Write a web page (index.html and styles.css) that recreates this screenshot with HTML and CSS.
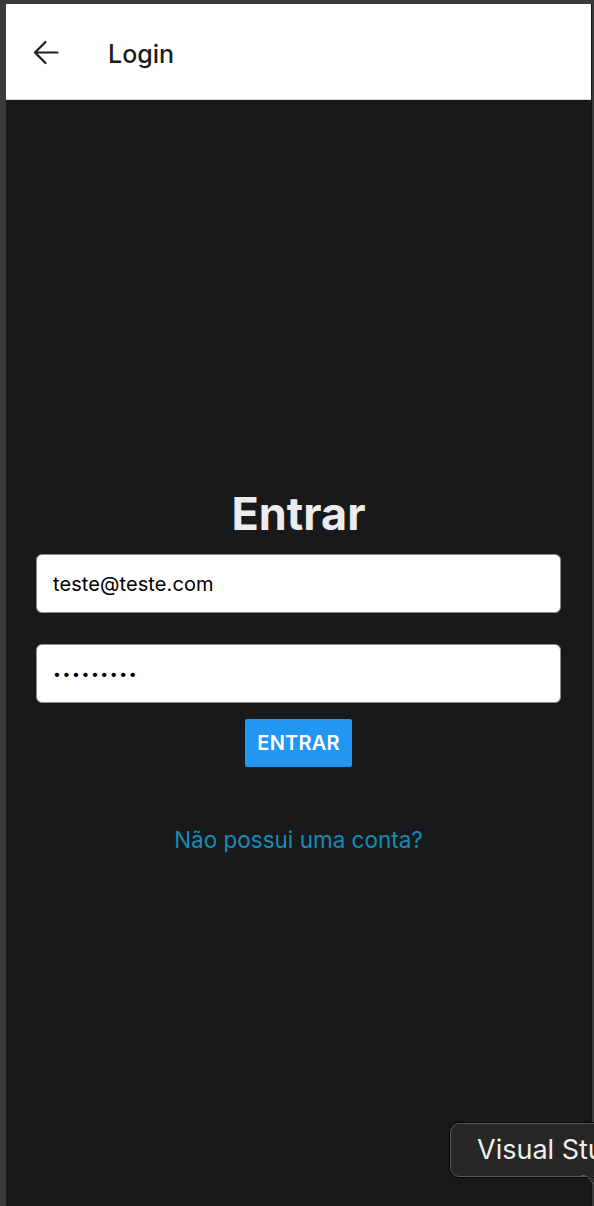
FILE: index.html
```html
<!DOCTYPE html>
<html lang="pt-BR">
<head>
<meta charset="utf-8">
<title>Login</title>
<link rel="stylesheet" href="styles.css">
</head>
<body>
<div class="device">
  <header class="app-header">
    <button class="back" aria-label="Voltar">
      <svg width="26" height="26" viewBox="0 0 26 26" fill="none" stroke="#1c1c1e" stroke-width="2.2" stroke-linecap="round" stroke-linejoin="round">
        <path d="M24.5 12.5 H2 M12.5 2 L2 12.5 L12.5 23"/>
      </svg>
    </button>
    <h1 class="header-title">Login</h1>
  </header>
  <main class="screen">
    <h2 class="title">Entrar</h2>
    <input class="field" type="email" value="teste@teste.com">
    <input class="field field-pass" type="password" value="123456789">
    <button class="btn">ENTRAR</button>
    <a class="link" href="#">Não possui uma conta?</a>
  </main>
</div>
<div class="tooltip">Visual Studio Code
  <svg class="tail" width="14" height="14" viewBox="0 0 14 14">
    <path d="M0 1 H2 Q8 1 12 10 L12 0 Z" fill="#262626"/>
    <path d="M0 1.5 H2 Q8 1.5 12 10" fill="none" stroke="#5c5c5c" stroke-width="1"/>
  </svg>
</div>
</body>
</html>
```

FILE: styles.css
```css
* { box-sizing: border-box; }
html, body { margin: 0; padding: 0; }
body {
  background: #3a3a3a;
  width: 594px;
  height: 1206px;
  overflow: hidden;
  position: relative;
  font-family: Inter, "Noto Sans", sans-serif;
}
.device {
  margin: 4px 0 0 6px;
  width: 586px;
  height: 1202px;
  background: #18191b;
  border-right: 1px solid #141414;
  display: flex;
  flex-direction: column;
}
.app-header {
  height: 96px;
  background: #ffffff;
  border-bottom: 1px solid #d8d8d8;
  display: flex;
  align-items: center;
  flex: none;
}
.back {
  border: 0;
  background: none;
  padding: 0;
  margin: 2px 0 0 27px;
  width: 26px;
  height: 26px;
  display: flex;
}
.header-title {
  margin: 4px 0 0 49px;
  font-size: 25px;
  font-weight: 500;
  color: #1c1c1e;
  letter-spacing: 0;
}
.screen {
  flex: 1;
  display: flex;
  flex-direction: column;
  align-items: center;
  padding: 387px 30px 0;
}
.title {
  margin: 0;
  font-size: 45px;
  line-height: 54px;
  font-weight: 700;
  color: #ececee;
}
.field {
  width: 525px;
  height: 59px;
  margin-top: 13px;
  border: 1px solid #8c8c8c;
  border-radius: 6px;
  background: #fff;
  padding: 0 16px;
  font-family: Inter, "Noto Sans", sans-serif;
  font-size: 20px;
  letter-spacing: 0.1px;
  color: #000;
  outline: none;
}
.field-pass {
  margin-top: 31px;
  font-size: 14px;
  letter-spacing: 1.6px;
}
.btn {
  margin-top: 16px;
  height: 48px;
  padding: 0 12px;
  border: 0;
  border-radius: 2px;
  background: #2196f3;
  color: #fff;
  font-family: Inter, "Noto Sans", sans-serif;
  font-size: 20px;
  font-weight: 600;
  letter-spacing: 0.2px;
}
.link {
  margin-top: 60px;
  font-size: 22.5px;
  line-height: 26px;
  color: #1b8bb4;
  text-decoration: none;
}
.tooltip {
  position: absolute;
  left: 450px;
  top: 1123px;
  width: 200px;
  height: 54px;
  padding-left: 26px;
  background: #262626;
  border: 1px solid #5c5c5c;
  border-radius: 9px;
  box-shadow: 0 0 0 1px #000;
  color: #efefef;
  font-size: 27px;
  line-height: 52px;
  white-space: nowrap;
}
.tail {
  position: absolute;
  left: 130px;
  top: 50px;
}
```
